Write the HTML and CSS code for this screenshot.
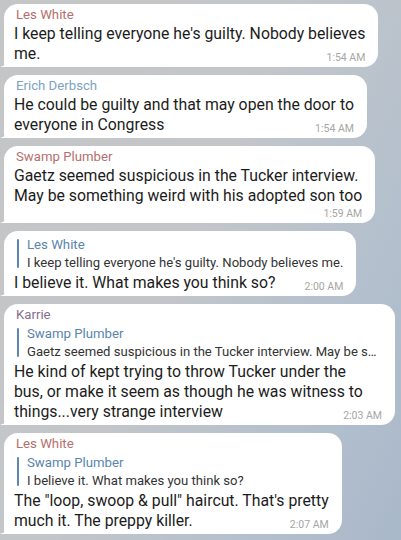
FILE: index.html
```html
<!DOCTYPE html>
<html lang="en">
<head>
    <meta charset="UTF-8">
    <meta name="viewport" content="width=device-width, initial-scale=1">
    <title>Chat</title>
    <link rel="stylesheet" href="styles.css">
</head>
<body>
    <div class="chat">

        <div class="bubble">
            <div class="sender red">Les White</div>
            <div class="text">I keep telling everyone he's guilty. Nobody believes<br>me.<span class="pad"></span></div>
            <span class="time">1:54 AM</span>
        </div>

        <div class="bubble">
            <div class="sender blue">Erich Derbsch</div>
            <div class="text">He could be guilty and that may open the door to<br>everyone in Congress<span class="pad"></span></div>
            <span class="time">1:54 AM</span>
        </div>

        <div class="bubble time-below">
            <div class="sender red">Swamp Plumber</div>
            <div class="text">Gaetz seemed suspicious in the Tucker interview.<br>May be something weird with his adopted son too</div>
            <span class="time">1:59 AM</span>
        </div>

        <div class="bubble">
            <div class="reply">
                <div class="reply-name">Les White</div>
                <div class="reply-text">I keep telling everyone he's guilty. Nobody believes me.</div>
            </div>
            <div class="text">I believe it. What makes you think so?<span class="pad"></span></div>
            <span class="time">2:00 AM</span>
        </div>

        <div class="bubble">
            <div class="sender purple">Karrie</div>
            <div class="reply">
                <div class="reply-name">Swamp Plumber</div>
                <div class="reply-text">Gaetz seemed suspicious in the Tucker interview. May be something weird with his adopted son too</div>
            </div>
            <div class="text">He kind of kept trying to throw Tucker under the<br>bus, or make it seem as though he was witness to<br>things...very strange interview<span class="pad"></span></div>
            <span class="time">2:03 AM</span>
        </div>

        <div class="bubble">
            <div class="sender red">Les White</div>
            <div class="reply">
                <div class="reply-name">Swamp Plumber</div>
                <div class="reply-text">I believe it. What makes you think so?</div>
            </div>
            <div class="text">The "loop, swoop &amp; pull" haircut. That's pretty<br>much it. The preppy killer.<span class="pad"></span></div>
            <span class="time">2:07 AM</span>
        </div>

    </div>
</body>
</html>
```

FILE: styles.css
```css
body {
    margin: 0;
    height: 540px;
    overflow: hidden;
    font-family: Roboto, "Liberation Sans", sans-serif;
    color: #1c1c1c;
    background: linear-gradient(115deg, #c4c5c6 0%, #c3c6c9 45%, #b4c0cd 75%, #a9b8ca 100%);
}
.chat {
    display: flex;
    flex-direction: column;
    align-items: flex-start;
    gap: 8px;
    padding: 4px 0 0 4px;
}
.bubble {
    position: relative;
    max-width: 391px;
    box-sizing: border-box;
    background-color: #fff;
    border-radius: 14px 14px 14px 4px;
    padding: 2px 13px 3px 10px;
}
.bubble.time-below {
    padding-bottom: 17px;
}
/* little tail on the bottom left corner */
.bubble::before {
    content: "";
    position: absolute;
    left: -5px;
    bottom: 0;
    width: 10px;
    height: 11px;
    background: radial-gradient(ellipse 10px 11px at 0 0, transparent 96%, #fff 100%);
}
.sender {
    font-size: 13.2px;
    line-height: 18px;
    padding-left: 2px;
}
.red { color: #b46f6c; }
.blue { color: #7ca3bf; }
.purple { color: #86708f; }
.text {
    font-size: 15.8px;
    line-height: 20px;
}
.pad {
    display: inline-block;
    width: 58px;
    height: 10px;
}
.time {
    position: absolute;
    right: 13px;
    bottom: 3px;
    font-size: 10.5px;
    color: #a6a6a6;
}
.reply {
    position: relative;
    margin: 1px 0 1px 3px;
    padding-left: 10px;
    overflow: hidden;
}
.bubble > .reply:first-child {
    margin-top: 3px;
}
/* quote bar, a bit shorter than the quote itself */
.reply::before {
    content: "";
    position: absolute;
    left: 0;
    top: 3px;
    bottom: 4px;
    width: 2px;
    border-radius: 1px;
    background-color: #5d87ad;
}
.reply-name {
    font-size: 13.2px;
    line-height: 18px;
    color: #5985ad;
}
.reply-text {
    font-size: 13.1px;
    line-height: 18px;
    color: #333;
    white-space: nowrap;
    overflow: hidden;
    text-overflow: ellipsis;
}
```
